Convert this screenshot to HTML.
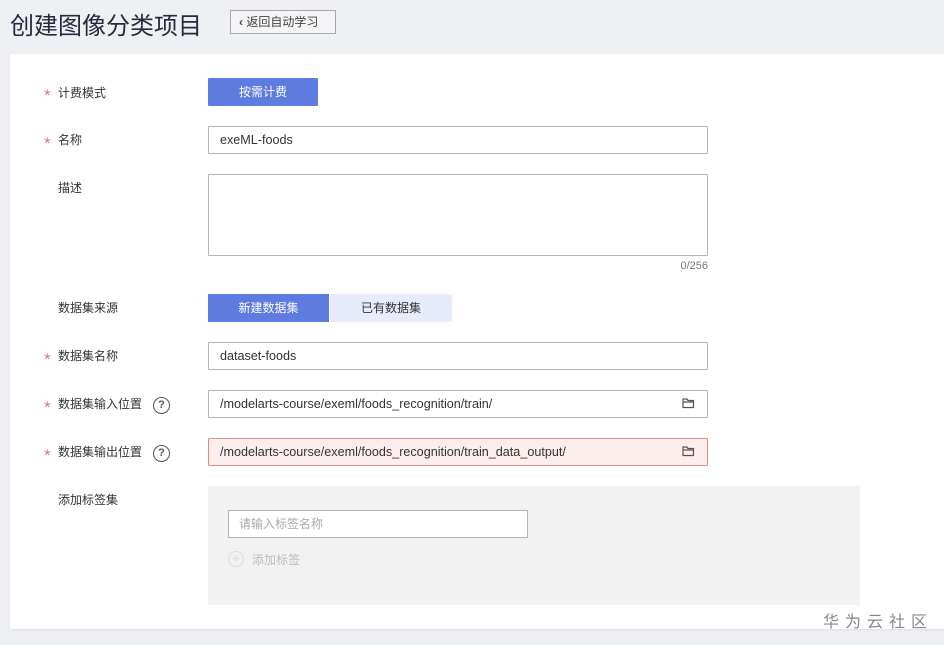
<!DOCTYPE html>
<html><head><meta charset="utf-8"><style>
*{box-sizing:border-box;margin:0;padding:0}
body{width:944px;height:645px;background:#eef0f4;font-family:"Liberation Sans","Noto Sans CJK SC",sans-serif;position:relative;overflow:hidden;color:#252b3a}
.abs{position:absolute}
h1{position:absolute;left:10px;top:6px;font-size:24px;font-weight:normal;color:#252b3a}
.back{position:absolute;left:230px;top:10px;width:106px;height:24px;border:1px solid #a8a8a8;background:#f5f5f7;font-size:12px;color:#444;line-height:22px;padding-left:8px}
.card{position:absolute;left:10px;top:54px;width:940px;height:575px;background:#fff;box-shadow:0 1px 2px #ddd}
.lbl{position:absolute;left:58px;font-size:12px;color:#333;line-height:16px}
.star{position:absolute;left:44px;color:#e57373;font-size:17px;line-height:16px;top:0}
.inp{position:absolute;left:208px;width:500px;height:28px;border:1px solid #b3b6bd;font-size:12.6px;line-height:26px;padding-left:11px;color:#333;border-radius:1px}
.q{position:absolute;left:153px;width:17px;height:17px;border:1.5px solid #555;border-radius:50%;font-size:11px;text-align:center;line-height:14px;font-weight:bold;color:#555}
.fold{position:absolute;left:682px}
</style></head><body>
<h1>创建图像分类项目</h1>
<div class="back"><b>‹</b> 返回自动学习</div>
<div class="card"></div>
<div class="star" style="top:88px">*</div><div class="lbl" style="top:85px">计费模式</div>
<div class="abs" style="left:208px;top:78px;width:110px;height:28px;background:#5e7ce0;color:#fff;font-size:12px;text-align:center;line-height:28px;border-radius:1px">按需计费</div>
<div class="star" style="top:136px">*</div><div class="lbl" style="top:132px">名称</div>
<div class="inp" style="top:126px">exeML-foods</div>
<div class="lbl" style="top:180px">描述</div>
<div class="inp" style="top:174px;height:82px"></div>
<div class="abs" style="left:660px;top:260px;width:48px;text-align:right;font-size:11px;color:#777">0/256</div>
<div class="lbl" style="top:300px">数据集来源</div>
<div class="abs" style="left:208px;top:294px;width:121px;height:28px;background:#5e7ce0;color:#fff;font-size:12px;text-align:center;line-height:28px">新建数据集</div>
<div class="abs" style="left:330px;top:294px;width:122px;height:28px;background:#e8ecfa;color:#333;font-size:12px;text-align:center;line-height:28px">已有数据集</div>
<div class="star" style="top:352px">*</div><div class="lbl" style="top:348px">数据集名称</div>
<div class="inp" style="top:342px">dataset-foods</div>
<div class="star" style="top:400px">*</div><div class="lbl" style="top:396px">数据集输入位置</div><div class="q" style="top:397px">?</div>
<div class="inp" style="top:390px">/modelarts-course/exeml/foods_recognition/train/</div>
<svg class="fold" style="top:397px" width="13" height="12" viewBox="0 0 13 12"><path d="M1 2h4l1 1.5h5.5v7H1z M1 5h10.5" fill="none" stroke="#555" stroke-width="1.2"/></svg>
<div class="star" style="top:448px">*</div><div class="lbl" style="top:444px">数据集输出位置</div><div class="q" style="top:445px">?</div>
<div class="inp" style="top:438px;background:#fdeeee;border-color:#e08c8c">/modelarts-course/exeml/foods_recognition/train_data_output/</div>
<svg class="fold" style="top:445px" width="13" height="12" viewBox="0 0 13 12"><path d="M1 2h4l1 1.5h5.5v7H1z M1 5h10.5" fill="none" stroke="#555" stroke-width="1.2"/></svg>
<div class="lbl" style="top:492px">添加标签集</div>
<div class="abs" style="left:208px;top:486px;width:652px;height:119px;background:#f2f2f2"></div>
<div class="abs" style="left:228px;top:510px;width:300px;height:28px;background:#fff;border:1px solid #b3b6bd;font-size:12px;color:#aaa;line-height:26px;padding-left:10px">请输入标签名称</div>
<div class="abs" style="left:228px;top:551px;width:16px;height:16px;border-radius:50%;border:1.5px solid #ddd;color:#ddd;font-size:14px;line-height:12px;text-align:center">+</div>
<div class="abs" style="left:252px;top:551px;font-size:12px;color:#bbb">添加标签</div>
<div class="abs" style="left:823px;top:608px;font-size:16px;color:#888;letter-spacing:6px">华为云社区</div>
</body></html>
